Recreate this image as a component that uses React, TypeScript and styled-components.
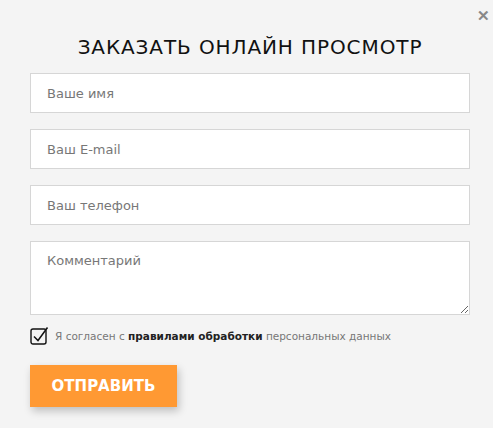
import styled, { createGlobalStyle } from "styled-components";

const GlobalStyle = createGlobalStyle`
  html, body {
    margin: 0;
    padding: 0;
    background: #f4f4f4;
  }
  * { box-sizing: border-box; }
`;

const Modal = styled.div`
  position: relative;
  width: 493px;
  height: 428px;
  background: #f4f4f4;
  padding: 34px 23px 0 30px;
  font-family: "DejaVu Sans", sans-serif;
`;

const Close = styled.button`
  position: absolute;
  top: 8px;
  right: 3px;
  border: 0;
  background: none;
  padding: 0;
  color: #888;
  font-size: 15px;
  font-weight: bold;
  line-height: 1;
  cursor: pointer;
`;

const Title = styled.h2`
  margin: 0 0 13px;
  text-align: center;
  font-size: 20px;
  font-weight: normal;
  letter-spacing: 0.9px;
  color: #111;
  line-height: 26px;
`;

const Form = styled.form`
  display: flex;
  flex-direction: column;
  gap: 16px;
`;

const Field = styled.input`
  height: 40px;
  width: 100%;
  border: 1px solid #d6d6d6;
  background: #fff;
  padding: 0 16px;
  font-family: inherit;
  font-size: 13px;
  color: #333;
  outline: none;
  &::placeholder { color: #777; }
`;

const Comment = styled.textarea`
  height: 74px;
  width: 100%;
  border: 1px solid #d6d6d6;
  background: #fff;
  padding: 11px 16px;
  font-family: inherit;
  font-size: 13px;
  color: #333;
  outline: none;
  resize: vertical;
  &::placeholder { color: #777; }
`;

const Agree = styled.label`
  display: flex;
  align-items: center;
  gap: 6px;
  margin-top: -5px;
  font-size: 10.5px;
  color: #777;
  b { color: #222; font-weight: bold; }
`;

const Box = styled.span`
  display: block;
  width: 19px;
  height: 19px;
  flex: none;
`;

const Submit = styled.button`
  width: 147px;
  height: 42px;
  margin-top: 4px;
  border: 0;
  background: #ff9933;
  color: #fff;
  font-family: inherit;
  font-weight: bold;
  font-size: 15px;
  box-shadow: 2px 4px 8px rgba(0, 0, 0, 0.22);
  cursor: pointer;
`;

export default function App() {
  return (
    <>
      <GlobalStyle />
      <Modal>
        <Close type="button">✕</Close>
        <Title>ЗАКАЗАТЬ ОНЛАЙН ПРОСМОТР</Title>
        <Form onSubmit={(e) => e.preventDefault()}>
          <Field placeholder="Ваше имя" />
          <Field placeholder="Ваш E-mail" />
          <Field placeholder="Ваш телефон" />
          <Comment placeholder="Комментарий" />
          <Agree>
            <Box>
              <svg width="19" height="19" viewBox="0 0 19 19">
                <rect x="1" y="3" width="15" height="15" rx="2" fill="none" stroke="#111" strokeWidth="1.4" />
                <path d="M4 10.5 L8 14.5 L17.5 1.5" fill="none" stroke="#111" strokeWidth="1.5" />
              </svg>
            </Box>
            <span>
              Я согласен с <b>правилами обработки</b> персональных данных
            </span>
          </Agree>
          <div>
            <Submit type="submit">ОТПРАВИТЬ</Submit>
          </div>
        </Form>
      </Modal>
    </>
  );
}
